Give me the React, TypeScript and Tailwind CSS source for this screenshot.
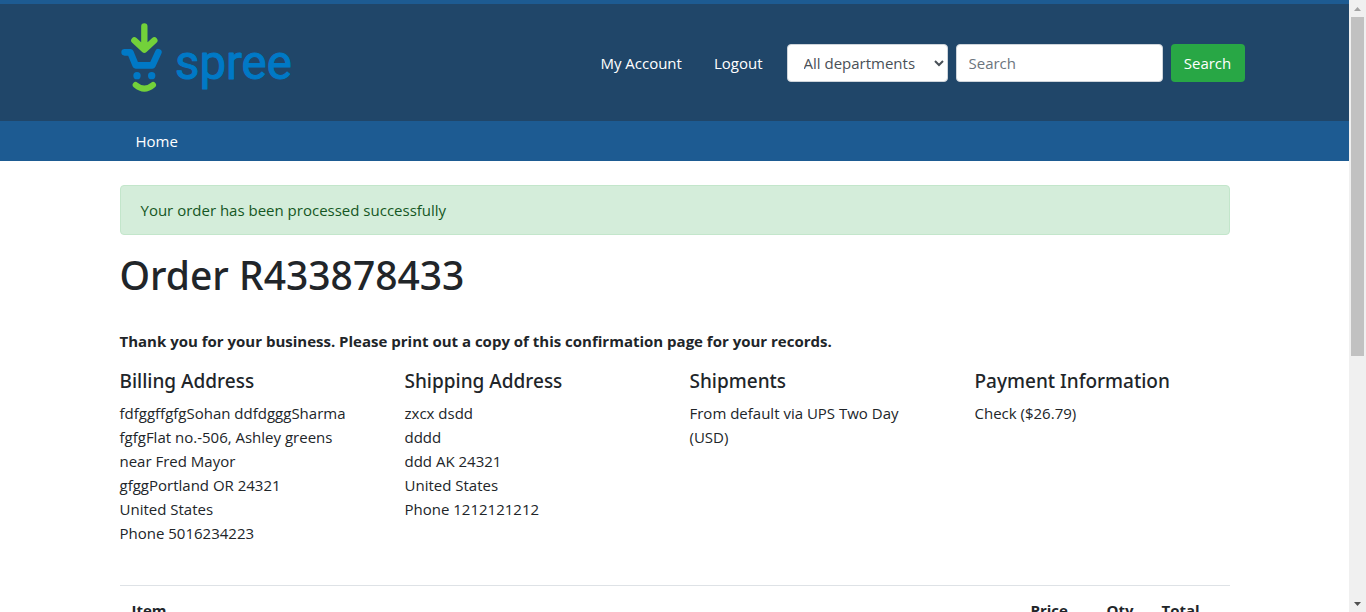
import React from "react";

const addresses = [
  {
    title: "Billing Address",
    lines: [
      "fdfggffgfgSohan ddfdgggSharma",
      "fgfgFlat no.-506, Ashley greens",
      "near Fred Mayor",
      "gfggPortland OR 24321",
      "United States",
      "Phone 5016234223",
    ],
  },
  {
    title: "Shipping Address",
    lines: ["zxcx dsdd", "dddd", "ddd AK 24321", "United States", "Phone 1212121212"],
  },
  { title: "Shipments", lines: ["From default via UPS Two Day", "(USD)"] },
  { title: "Payment Information", lines: ["Check ($26.79)"] },
];

function Logo() {
  return (
    <svg width="176" height="72" viewBox="60 66 528 216" role="img" aria-label="spree" className="block">
      <g fill="none" strokeLinecap="round" strokeLinejoin="round">
        <path d="M133 79V146M103 121L133 149L163 121" stroke="#73d13a" strokeWidth="19" />
        <path d="M107 255Q133 277 159 255" stroke="#73d13a" strokeWidth="18" />
        <path d="M74 157H91L107 196H157L175 157" stroke="#0079c6" strokeWidth="20" />
      </g>
      <circle cx="111" cy="227" r="11" fill="#0079c6" />
      <circle cx="155" cy="227" r="11" fill="#0079c6" />
      <text
        x="225"
        y="236"
        fontSize="142"
        fill="#0079c6"
        stroke="#0079c6"
        strokeWidth="3"
        strokeLinejoin="round"
        className="font-['Roboto','Liberation_Sans',sans-serif]"
      >
        spree
      </text>
    </svg>
  );
}

function Header() {
  return (
    <header className="border-t-4 border-[#1d5b92] bg-[#204669]">
      <div className="mx-auto flex h-[117px] max-w-[1140px] items-center justify-between pl-[15px]">
        <a href="#home" className="pb-2.5">
          <Logo />
        </a>
        <div className="flex items-center">
          <nav className="flex gap-8 pr-6 text-white" aria-label="Account">
            <a href="#account">My Account</a>
            <a href="#logout">Logout</a>
          </nav>
          <form className="flex gap-2" onSubmit={(e) => e.preventDefault()}>
            <div className="relative">
              <select
                aria-label="Department"
                className="h-[38px] w-[161px] appearance-none rounded border border-[#ced4da] bg-white pl-4 text-[#495057]"
              >
                <option>All departments</option>
              </select>
              <svg
                viewBox="0 0 10 7"
                className="pointer-events-none absolute top-4 right-1 h-[7px] w-[10px]"
                fill="none"
                stroke="#495057"
                strokeWidth="2"
                aria-hidden="true"
              >
                <path d="M1 1L5 5L9 1" />
              </svg>
            </div>
            <input
              type="search"
              aria-label="Search"
              placeholder="Search"
              className="h-[38px] w-[207px] rounded border border-[#ced4da] bg-white px-3 placeholder:text-[#6c757d]"
            />
            <button type="submit" className="h-[38px] w-[74px] rounded bg-[#28a745] text-white">
              Search
            </button>
          </form>
        </div>
      </div>
    </header>
  );
}

function Scrollbar() {
  return (
    <div className="flex w-[17px] shrink-0 flex-col items-center bg-[#f0f0f0] pr-px" aria-hidden="true">
      <div className="flex h-[17px] shrink-0 items-center">
        <svg width="7" height="4" viewBox="0 0 7 4" fill="#a3a3a3">
          <path d="M0 4L3.5 0L7 4Z" />
        </svg>
      </div>
      <div className="h-[339px] w-[13px] bg-[#c1c1c1]" />
      <div className="mt-auto flex h-[17px] shrink-0 items-center">
        <svg width="7" height="4" viewBox="0 0 7 4" fill="#505050">
          <path d="M0 0L3.5 4L7 0Z" />
        </svg>
      </div>
    </div>
  );
}

export default function App() {
  return (
    <div className="flex h-screen bg-white font-['Open_Sans','Noto_Sans',sans-serif] text-[15px] leading-6 text-[#212529]">
      <div className="min-w-0 flex-1 overflow-hidden">
        <Header />
        <nav className="bg-[#1d5b92] text-white" aria-label="Main">
          <div className="mx-auto max-w-[1140px] px-[31px] py-2">
            <a href="#home">Home</a>
          </div>
        </nav>
        <main className="mx-auto max-w-[1140px] px-[15px] pt-6">
          <div role="alert" className="rounded border border-[#c3e6cb] bg-[#d4edda] px-5 py-3 text-[#155724]">
            Your order has been processed successfully
          </div>
          <h1 className="mt-4 font-['Noto_Sans','Open_Sans',sans-serif] text-[39px] leading-12 font-medium">
            Order R433878433
          </h1>
          <p className="mt-[30px] font-bold">
            Thank you for your business. Please print out a copy of this confirmation page for your records.
          </p>
          <div className="mt-4 grid grid-cols-4 gap-[30px]">
            {addresses.map((block) => (
              <section key={block.title}>
                <h2 className="mb-2 font-['Noto_Sans','Open_Sans',sans-serif] text-[19px] leading-6 font-medium">
                  {block.title}
                </h2>
                {block.lines.map((line) => (
                  <p key={line}>{line}</p>
                ))}
              </section>
            ))}
          </div>
          <table className="mt-10 w-full border-t border-[#dee2e6]">
            <thead>
              <tr className="text-left font-bold">
                <th className="p-3">Item</th>
                <th className="w-[76px] p-3">Price</th>
                <th className="w-[55px] p-3">Qty</th>
                <th className="w-20 p-3">Total</th>
              </tr>
            </thead>
          </table>
        </main>
      </div>
      <Scrollbar />
    </div>
  );
}
